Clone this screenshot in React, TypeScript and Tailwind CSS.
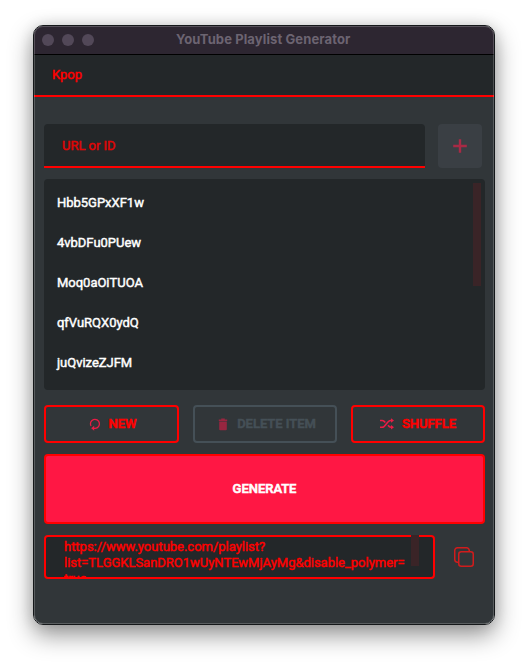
import React from "react";

const videos = ["Hbb5GPxXF1w", "4vbDFu0PUew", "Moq0aOiTUOA", "qfVuRQX0ydQ", "juQvizeZJFM"];

function PlusIcon() {
  return (
    <svg width="14" height="14" viewBox="0 0 14 14" fill="none" stroke="#a82a45" strokeWidth="2.4">
      <path d="M7 0.2v13.6M0.2 7h13.6" />
    </svg>
  );
}

function ResetIcon() {
  return (
    <svg width="12" height="14" viewBox="0 0 12 14" fill="none" stroke="#ea1c45" strokeWidth="1.3">
      <path d="M2 9A4.5 4.5 0 1 1 6.2 11.3H4" />
      <path d="M5.2 8.7L2.2 11.3L5.2 13.8z" fill="#ea1c45" stroke="none" />
    </svg>
  );
}

function TrashIcon() {
  return (
    <svg width="10" height="13" viewBox="0 0 10 13" fill="#982640">
      <path d="M3.2 0.4h3.6v1H9.2v1.7H0.8V1.4h2.4z" />
      <path d="M1.2 3.5h7.6v7.8a1 1 0 0 1-1 1H2.2a1 1 0 0 1-1-1z" />
    </svg>
  );
}

function ShuffleIcon() {
  return (
    <svg width="14" height="12" viewBox="0 0 14 12" fill="none" stroke="#ea1c45" strokeWidth="1.6">
      <path d="M0 2.5h2.2c1.5 0 2.2.9 3.1 2.1M8 7.3c.9 1.3 1.6 2 3 2h1M0 9.3h2.2C5.8 9.3 6.8 2.5 10.6 2.5H12" />
      <path d="M11 0.3l3 2.2-3 2.2zM11 7.1l3 2.2-3 2.2z" fill="#ea1c45" stroke="none" />
    </svg>
  );
}

function CopyIcon() {
  return (
    <svg width="20" height="20" viewBox="0 0 20 20" fill="none" stroke="#d11c1c" strokeWidth="1.5">
      <rect x="4.75" y="4.75" width="14.5" height="14.5" rx="2.5" />
      <path d="M4.75 15.2H3.5A2.75 2.75 0 0 1 .75 12.5v-9A2.75 2.75 0 0 1 3.5.75h9A2.75 2.75 0 0 1 15.25 3.5v1.25" />
    </svg>
  );
}

export default function App() {
  return (
    <div className="h-[666px] w-[528px] overflow-hidden bg-white pl-[33px] pt-[25px] font-['Roboto',sans-serif] text-[13px] font-normal tracking-[-0.02px] [-webkit-text-stroke:0.45px]">
      <div className="h-[600px] w-[462px] overflow-hidden rounded-[10px] border border-[#15181a] shadow-[0_10px_24px_rgba(0,0,0,0.42),0_0_14px_rgba(0,0,0,0.12)]">
        <div className="relative flex h-full flex-col bg-[#313639]">
          <header className="flex h-[29px] shrink-0 items-center border-b border-black bg-[#2d2631] pl-2">
            <div className="flex gap-2">
              <span className="size-3 rounded-full bg-[#524858]" />
              <span className="size-3 rounded-full bg-[#524858]" />
              <span className="size-3 rounded-full bg-[#524858]" />
            </div>
            <h1 className="ml-[82px] whitespace-nowrap font-['Inter',sans-serif] text-[13px] font-bold tracking-[0.11px] text-[#6c6471] [-webkit-text-stroke:0px]">YouTube Playlist Generator</h1>
          </header>
          <div className="flex h-[42px] shrink-0 items-center border-b-2 border-[#ff0000] bg-[#232729] pl-[18px] text-[#ff0000]">
            Kpop
          </div>
          <main className="flex flex-col pl-[10px] pr-[9px] pt-[27px]">
            <div className="flex h-11 gap-[13px]">
              <div className="flex w-[381px] items-center rounded-t border-b-2 border-[#ff0000] bg-[#232729] pl-[18px] pt-px text-[#e00505]">URL or ID</div>
              <button className="flex size-11 items-center justify-center rounded bg-[#3a3f44]"><PlusIcon /></button>
            </div>
            <div className="mt-[11px] flex h-[211px] justify-between rounded bg-[#232729] pl-[13px] pr-1 pt-1">
              <ul className="text-white">
                {videos.map((v) => (
                  <li key={v} className="flex h-10 items-center">{v}</li>
                ))}
              </ul>
              <div className="h-[103px] w-2 bg-[#3a2427]" />
            </div>
            <div className="mt-[15px] flex h-[38px] justify-between font-medium [-webkit-text-stroke:0.6px]">
              <button className="flex w-[135px] items-center justify-center gap-2 rounded border-2 border-[#ff0000] pl-0.5 text-[#ff0000]"><ResetIcon />NEW</button>
              <button className="flex w-[144px] items-center justify-center gap-[9px] rounded border-2 border-[#455057] pl-1 text-[#455057]"><TrashIcon />DELETE ITEM</button>
              <button className="flex w-[134px] items-center justify-center gap-2 rounded border-2 border-[#ff0000] text-[#ff0000]"><ShuffleIcon />SHUFFLE</button>
            </div>
            <button className="mt-[11px] h-[70px] rounded border-2 border-[#ff0000] bg-[#ff1744] font-medium text-white [-webkit-text-stroke:0.6px]">GENERATE</button>
            <div className="mt-[11px] flex h-11 items-center">
              <div className="relative h-11 w-[391px] rounded border-2 border-[#ff0000] bg-[#232729]">
                <div className="h-10 overflow-hidden whitespace-nowrap pl-[18px] pt-0.5 leading-4 text-[#ff0000]">
                  https://www.youtube.com/playlist?<br />list=TLGGKLSanDRO1wUyNTEwMjAyMg&amp;disable_polymer=<br />true
                </div>
                <div className="absolute -top-0.5 right-3.5 h-[31px] w-2 bg-[#3a2427]" />
              </div>
              <button className="ml-[19px]"><CopyIcon /></button>
            </div>
          </main>
          <div className="pointer-events-none absolute inset-0 rounded-[9px] border border-white/20" />
        </div>
      </div>
    </div>
  );
}
